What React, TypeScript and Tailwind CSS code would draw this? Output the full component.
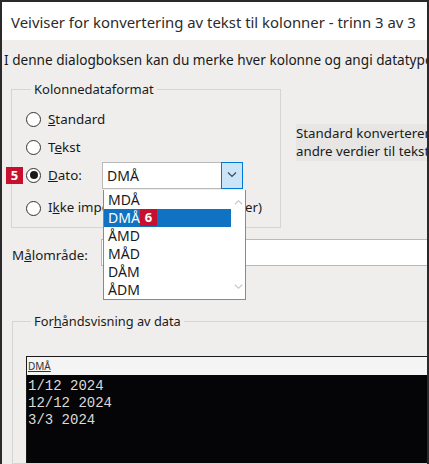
import React from 'react';

const font = { fontFamily: '"Noto Sans", "Open Sans", Arial, sans-serif' };

const Radio: React.FC<{ checked?: boolean }> = ({ checked }) => (
    <span className="w-[15px] h-[15px] rounded-full border border-[#333] bg-white flex items-center justify-center shrink-0">
        {checked && <span className="w-[8px] h-[8px] rounded-full bg-[#1a1a1a]" />}
    </span>
);

const Badge: React.FC<{ n: string; className?: string }> = ({ n, className = '' }) => (
    <span className={`absolute w-[17px] h-[17px] bg-[#c8102e] text-white text-[13px] font-bold leading-[17px] text-center ${className}`}>
        {n}
    </span>
);

const Chevron: React.FC<{ up?: boolean; className?: string }> = ({ up, className = '' }) => (
    <svg className={className} viewBox="0 0 10 6" fill="none" stroke="currentColor" strokeWidth={1.2}>
        <path d={up ? 'M1 5.5L5 1.5L9 5.5' : 'M1 0.5L5 4.5L9 0.5'} />
    </svg>
);

export default function App() {
    const options = ['MDÅ', 'DMÅ', 'ÅMD', 'MÅD', 'DÅM', 'ÅDM'];

    return (
        <div className="w-[429px] h-[464px] overflow-hidden bg-[#efeeec] border-[#2a2a2a] border-l-2 border-r-2 border-t-2 flex flex-col text-[#1a1a1a]" style={font}>
            {/* Title bar */}
            <div className="h-[38px] shrink-0 bg-white flex items-center pl-[9px] pt-[2px] text-[14.9px] text-[#2b2b2b] whitespace-nowrap">
                Veiviser for konvertering av tekst til kolonner - trinn 3 av 3
            </div>

            {/* Body */}
            <div className="relative flex-1 flex flex-col">
                <div className="mt-[10px] h-[20px] leading-[20px] pl-[2px] text-[13.6px] whitespace-nowrap">
                    I denne dialogboksen kan du merke hver kolonne og angi datatype
                </div>

                <div className="flex mt-[11px]">
                    <fieldset className="ml-[9px] w-[270px] h-[147px] border border-[#d6d5d3] shrink-0 pl-[14px] pt-[8px]">
                        <legend className="ml-[5px] px-[3px] text-[13px] leading-[16px]">Kolonnedataformat</legend>
                        <div className="h-[28px] flex items-center gap-[7px] text-[13.4px]">
                            <Radio /> <span><u>S</u>tandard</span>
                        </div>
                        <div className="h-[28px] flex items-center gap-[7px] text-[13.4px]">
                            <Radio /> <span>T<u>e</u>kst</span>
                        </div>
                        <div className="h-[28px] flex items-center gap-[7px] text-[13.4px]">
                            <Radio checked /> <span className="w-[47px]"><u>D</u>ato:</span>
                            <div className="w-[141px] h-[27px] bg-white border border-[#b9b9b9] flex items-stretch">
                                <span className="flex-1 pl-[4px] text-[14px] leading-[25px]">DMÅ</span>
                                <span className="w-[22px] bg-[#cce4f7] border border-[#0078d7] -my-px -mr-px flex items-center justify-center text-[#3b4a5a]">
                                    <Chevron className="w-[10px] h-[6px]" />
                                </span>
                            </div>
                        </div>
                        <div className="h-[38px] flex items-center gap-[7px] text-[13.3px] whitespace-nowrap">
                            <Radio /> <span>I<u>k</u>ke importer kolonne (hopp over)</span>
                        </div>
                    </fieldset>

                    <div className="ml-[15px] mt-[43px] h-[37px] flex-1 bg-[#e7e6e4] text-[13.3px] leading-[18px] whitespace-nowrap overflow-hidden">
                        <div>Standard konverterer numeriske verdier til tall, datoverdier til datoer og alle</div>
                        <div>andre verdier til tekst.</div>
                    </div>
                </div>

                <div className="flex items-center mt-[11px] h-[27px]">
                    <span className="ml-[10px] w-[89px] text-[13.4px] mt-[5px]">M<u>å</u>lområde:</span>
                    <div className="flex-1 h-full bg-white border border-[#b9b9b9] -mr-[4px]" />
                </div>

                <fieldset className="mt-[47px] ml-[10px] -mr-[10px] flex-1 border border-[#d6d5d3] pl-[13px] pt-[27px]">
                    <legend className="ml-[5px] px-[3px] text-[12.8px] leading-[16px]">For<u>h</u>åndsvisning av data</legend>
                    <div className="h-full border-t border-l border-[#1a1a1a] flex flex-col">
                        <div className="h-[18px] bg-[#f4f4f4] pl-[1px] text-[10px] leading-[18px] underline text-[#333]">DMÅ</div>
                        <div className="flex-1 bg-[#050508] pt-[3px] pl-[1px] text-[14px] leading-[17px] text-[#dcdad6]" style={{ fontFamily: '"Liberation Mono", "Courier New", monospace' }}>
                            <div>1/12 2024</div>
                            <div>12/12 2024</div>
                            <div>3/3 2024</div>
                        </div>
                    </div>
                </fieldset>

                {/* Open dropdown list */}
                <div className="absolute left-[101px] top-[150px] w-[143px] h-[110px] bg-white border border-[#8a8a8a] border-t-0 flex">
                    <div className="flex-1 pt-[1px]">
                        {options.map((o) => (
                            <div
                                key={o}
                                className={`relative h-[18px] pl-[4px] text-[14px] leading-[18px] ${o === 'DMÅ' ? 'bg-[#0f72c2] text-white' : ''}`}
                            >
                                {o}
                                {o === 'DMÅ' && <Badge n="6" className="left-[36px] top-0" />}
                            </div>
                        ))}
                    </div>
                    <div className="w-[14px] flex flex-col justify-between items-center py-[9px] text-[#c4c4c4]">
                        <Chevron up className="w-[9px] h-[6px]" />
                        <Chevron className="w-[9px] h-[6px]" />
                    </div>
                </div>

                <Badge n="5" className="left-[4px] top-[127px]" />
            </div>
        </div>
    );
}
